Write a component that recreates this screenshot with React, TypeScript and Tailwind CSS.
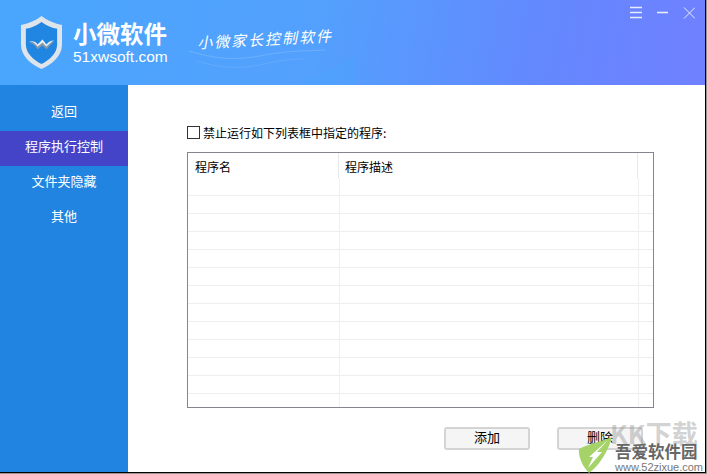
const cjk = "font-['Noto_Sans_CJK_SC','Liberation_Sans',sans-serif]";

const navItems = ["返回", "程序执行控制", "文件夹隐藏", "其他"];
const rows = Array.from({ length: 12 });

function ShieldLogo() {
  return (
    <svg width="43" height="55" viewBox="0 0 44 56" className="shrink-0">
      <path d="M22 1 C28 6 36 9 43 10 V30 C43 42 33 50 22 55 C11 50 1 42 1 30 V10 C8 9 16 6 22 1 Z" fill="#dfe4ea" />
      <path d="M22 7 C27 11 33 13 38 14 V30 C38 39 30 46 22 50 C14 46 6 39 6 30 V14 C11 13 17 11 22 7 Z" fill="#2186e2" />
      <path d="M9 28 C13 27 16 28 18 32 L23 27 L27 32 C30 29 32 27 35 27 C32 29 30 32 27 35 L23 31 L18 35 C16 31 13 29 9 28 Z" fill="#8b98a8" />
      <path d="M9 27 C13 26 16 27 18 30 L23 25 L27 30 C30 27 32 26 35 26 C32 27 30 30 27 32 L23 28 L18 32 C16 29 13 27 9 27 Z" fill="#eef3f9" />
    </svg>
  );
}

function Header() {
  return (
    <div className="h-[85px] flex items-start pl-[20px] pt-[15px] bg-[linear-gradient(100deg,#49a6fd_0%,#53a0fd_45%,#6487fe_78%,#7080ff_100%)] relative overflow-hidden">
      <svg width="170" height="40" viewBox="0 0 170 40" fill="none" className="absolute left-[185px] top-[45px]">
        <path d="M0 40 L170 40 L170 10 C150 22 130 30 115 40 Z" fill="#4fa2fd" opacity="0.6" />
        <path d="M4 6 C30 14 50 16 80 10 C100 6 120 6 140 5" stroke="#ffffff" strokeOpacity="0.16" />
        <path d="M12 16 C36 24 60 24 84 18 C96 15 110 14 120 14" stroke="#ffffff" strokeOpacity="0.1" />
      </svg>
      <ShieldLogo />
      <div className="ml-[10px] mt-[4px] text-white">
        <div className={`${cjk} text-[23.5px] leading-[29px] font-bold`}>小微软件</div>
        <div className="font-['Liberation_Sans',sans-serif] text-[15.5px] leading-[19px] -mt-[1px]">51xwsoft.com</div>
      </div>
      <div className={`${cjk} ml-[29px] mt-[14px] text-white text-[15px] leading-[20px] tracking-[2px] italic -rotate-3 relative whitespace-nowrap`}>小微家长控制软件</div>
      <div className="absolute top-[6px] right-[10px] flex items-center gap-[15px]">
        <svg width="12" height="13" viewBox="0 0 12 13" stroke="#e8ecff" strokeWidth="1.4">
          <path d="M0 1.5H12M0 6.5H12M0 11.5H12" />
        </svg>
        <svg width="11" height="13" viewBox="0 0 11 13" stroke="#e8ecff" strokeWidth="1.6">
          <path d="M0 6.5H11" />
        </svg>
        <svg width="12" height="13" viewBox="0 0 12 13" stroke="#e8ecff" strokeWidth="1">
          <path d="M1 1.5L12 12.5M12 1.5L1 12.5" />
        </svg>
      </div>
    </div>
  );
}

function Sidebar() {
  return (
    <div className="w-[128px] shrink-0 bg-[#2184e0] pt-[11px]">
      {navItems.map((item, i) => (
        <div
          key={item}
          className={`h-[35px] pb-[5px] flex items-center justify-center text-[13px] text-white ${cjk} ${i === 1 ? "bg-[#4444c8]" : ""}`}
        >
          {item}
        </div>
      ))}
    </div>
  );
}

function ProgramTable() {
  return (
    <div className="mt-[12px] w-[467px] h-[256px] border border-[#85858f] overflow-hidden">
      <div className={`h-[25px] flex text-[12px] text-black ${cjk}`}>
        <div className="w-[151px] pl-[7px] pt-[5px] leading-[18px] border-r border-[#e8e8e8]">程序名</div>
        <div className="w-[299px] pl-[6px] pt-[5px] leading-[18px] border-r border-[#e8e8e8]">程序描述</div>
      </div>
      <div className="h-[18px] flex border-b border-[#eeeeee]">
        <div className="w-[152px] border-r border-[#f0f0f0]" />
        <div className="w-[299px] border-r border-[#f0f0f0]" />
      </div>
      {rows.map((_, i) => (
        <div key={i} className="h-[18px] flex border-b border-[#eeeeee]">
          <div className="w-[152px] border-r border-[#f0f0f0]" />
          <div className="w-[299px] border-r border-[#f0f0f0]" />
        </div>
      ))}
    </div>
  );
}

function ActionButton({ label }: { label: string }) {
  return (
    <button className={`w-[86px] h-[23px] pb-[3px] rounded-[3px] border-2 border-[#d4d4d4] bg-[#f5f5f5] text-[13px] leading-[16px] text-black ${cjk}`}>
      {label}
    </button>
  );
}

function Watermark() {
  return (
    <div className="absolute left-[578px] top-[420px] w-[129px] h-[52px] pointer-events-none">
      <div className={`absolute left-[32px] top-[0px] text-[26px] leading-[26px] font-bold text-[#8a8a8a]/40 whitespace-nowrap ${cjk}`}>
        KK下载
      </div>
      <svg width="35" height="36" viewBox="0 0 35 36" className="absolute left-0 top-[17px]">
        <path d="M34 0 C24 4 8 8 1 12 C0 20 5 30 11 36 C22 28 30 14 34 0 Z" fill="#a5d36a" />
        <path d="M30 3 L11 20 L15 20 L10 31 L24 15 L19 15 Z" fill="#ffffff" />
      </svg>
      <div className={`absolute left-[37px] top-[22px] text-[16.5px] leading-[18px] font-bold text-[#666666] whitespace-nowrap ${cjk}`}>
        吾爱软件园
      </div>
      <div className="absolute left-[37px] top-[41px] font-['Liberation_Sans',sans-serif] text-[11px] leading-[12px] text-[#777777] whitespace-nowrap">
        www.52zixue.com
      </div>
    </div>
  );
}

export default function App() {
  return (
    <div className="w-[707px] h-[474px] relative bg-[#9a948c] overflow-hidden">
      <div className="w-[706px] h-[473px] flex flex-col bg-white border-r border-b border-black">
        <Header />
        <div className="flex flex-1 min-h-0">
          <Sidebar />
          <div className="flex-1 pl-[59px] pt-[40px]">
            <label className={`flex items-center h-[15px] text-[12px] text-black ${cjk}`}>
              <span className="w-[13px] h-[13px] border border-[#333333] bg-white" />
              <span className="ml-[3px]">禁止运行如下列表框中指定的程序:</span>
            </label>
            <ProgramTable />
            <div className="mt-[19px] ml-[257px] flex gap-[27px]">
              <ActionButton label="添加" />
              <ActionButton label="删除" />
            </div>
          </div>
        </div>
      </div>
      <Watermark />
    </div>
  );
}
